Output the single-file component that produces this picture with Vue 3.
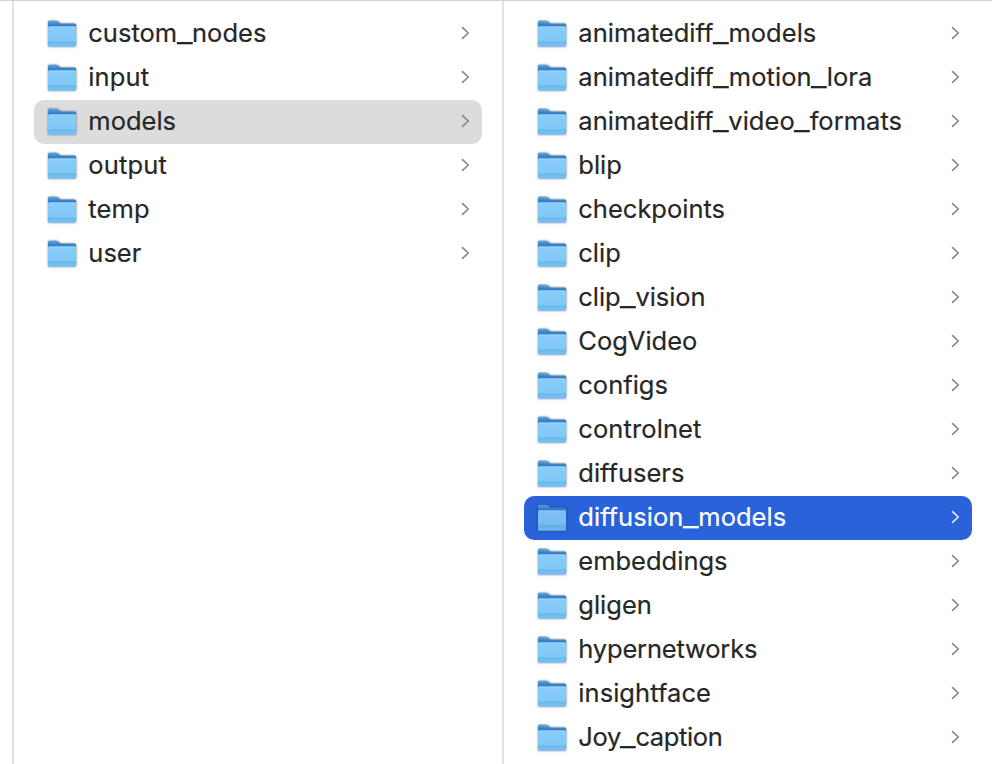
<script setup>
const tracking = {
  custom_nodes: 0,
  input: 0.15,
  output: 0.15,
  temp: 0.15,
  animatediff_models: 0.03,
  animatediff_motion_lora: 0.06,
  animatediff_video_formats: 0.02,
  clip_vision: -0.07,
  controlnet: 0.1,
  diffusion_models: 0.03,
  hypernetworks: -0.18,
  insightface: 0.05,
  Joy_caption: -0.38,
}

const split = (name) => name.split(/(_)/)

const columns = [
  {
    id: 'root',
    kind: 'muted',
    selected: 'models',
    items: ['custom_nodes', 'input', 'models', 'output', 'temp', 'user'],
  },
  {
    id: 'models',
    kind: 'active',
    selected: 'diffusion_models',
    items: [
      'animatediff_models', 'animatediff_motion_lora', 'animatediff_video_formats', 'blip',
      'checkpoints', 'clip', 'clip_vision', 'CogVideo', 'configs', 'controlnet', 'diffusers',
      'diffusion_models', 'embeddings', 'gligen', 'hypernetworks', 'insightface', 'Joy_caption',
    ],
  },
]
</script>

<template>
  <main class="browser">
    <svg class="defs" width="0" height="0" aria-hidden="true">
      <defs>
        <linearGradient id="folder-back" x1="0" y1="0" x2="0" y2="1">
          <stop offset="0" stop-color="#5aa6dc" />
          <stop offset="0.22" stop-color="#3279c2" />
          <stop offset="1" stop-color="#3279c2" />
        </linearGradient>
        <linearGradient id="folder-front" x1="0" y1="0" x2="0" y2="1">
          <stop offset="0" stop-color="#89cdf8" />
          <stop offset="0.7" stop-color="#80c9f7" />
          <stop offset="1" stop-color="#72bff1" />
        </linearGradient>
      </defs>
    </svg>
    <div class="gutter"></div>
    <section v-for="col in columns" :key="col.id" class="column">
      <div
        v-for="name in col.items"
        :key="name"
        class="row"
        :class="name === col.selected ? col.kind : ''"
      >
        <svg class="folder" width="32" height="32" viewBox="0 -0.6 32 32">
          <path d="M2 4.6Q2 3.2 3.5 3.2H10.2Q11.5 3.2 12.5 4.2L13.3 5Q14.2 5.9 15.4 5.9H28.6Q30.1 5.9 30.1 7.4V26H2Z" fill="url(#folder-back)" />
          <path d="M2 10Q2 8.8 3.3 8.8H28.8Q30.1 8.8 30.1 10V28Q30.1 29.2 28.9 29.2H3.2Q2 29.2 2 28Z" fill="url(#folder-front)" />
          <path d="M2.8 9.3H29.2" stroke="#a1dafc" stroke-width="0.8" />
          <path d="M2 24.4H30.1" stroke="#5fade2" stroke-width="0.9" />
          <path d="M2 26.2H30.1" stroke="#64b0e4" stroke-width="0.6" />
        </svg>
        <span class="name" :style="{ letterSpacing: (tracking[name] || 0) + 'px' }"><span
          v-for="(part, i) in split(name)"
          :key="i"
          :class="{ underscore: part === '_' }"
        >{{ part }}</span></span>
        <svg class="chevron" width="10" height="14" viewBox="0 0 10 14">
          <path d="M2.5 1.7L8.3 7L2.5 12.3" fill="none" stroke="currentColor" stroke-width="1.6" stroke-linecap="round" stroke-linejoin="round" />
        </svg>
      </div>
    </section>
  </main>
</template>

<style>
body {
  margin: 0;
  background: #fff;
}
</style>

<style scoped>
.browser {
  display: flex;
  box-sizing: border-box;
  width: 992px;
  height: 764px;
  overflow: hidden;
  border-top: 1px solid #d3d3d3;
  background: #fff;
  font-family: Inter, "Liberation Sans", sans-serif;
}
.defs {
  position: absolute;
}
.gutter {
  flex: none;
  width: 12px;
}
.column {
  flex: none;
  box-sizing: border-box;
  width: 490px;
  padding: 11px 20px 0;
  border-left: 2px solid #e1e1e1;
}
.row {
  display: flex;
  align-items: center;
  box-sizing: border-box;
  height: 44px;
  padding: 0 12px 2px;
  border-radius: 10px;
  color: #272727;
}
.muted {
  background: #dcdcdc;
}
.active {
  background: #2962d9;
  color: #fff;
}
.folder {
  flex: none;
  margin-right: 10.3px;
  filter: drop-shadow(0 0.8px 0.8px rgba(0, 0, 0, 0.45));
}
.active .folder {
  opacity: 0.88;
}
.name {
  flex: 1;
  font-size: 25.5px;
  line-height: 42px;
  white-space: nowrap;
  -webkit-text-stroke: 0.2px currentColor;
}
.underscore {
  display: inline-block;
  margin: 0 1.65px;
  transform: scaleX(1.35);
}
.chevron {
  flex: none;
  color: #868686;
}
.active .chevron {
  color: #e6edfb;
}
</style>
